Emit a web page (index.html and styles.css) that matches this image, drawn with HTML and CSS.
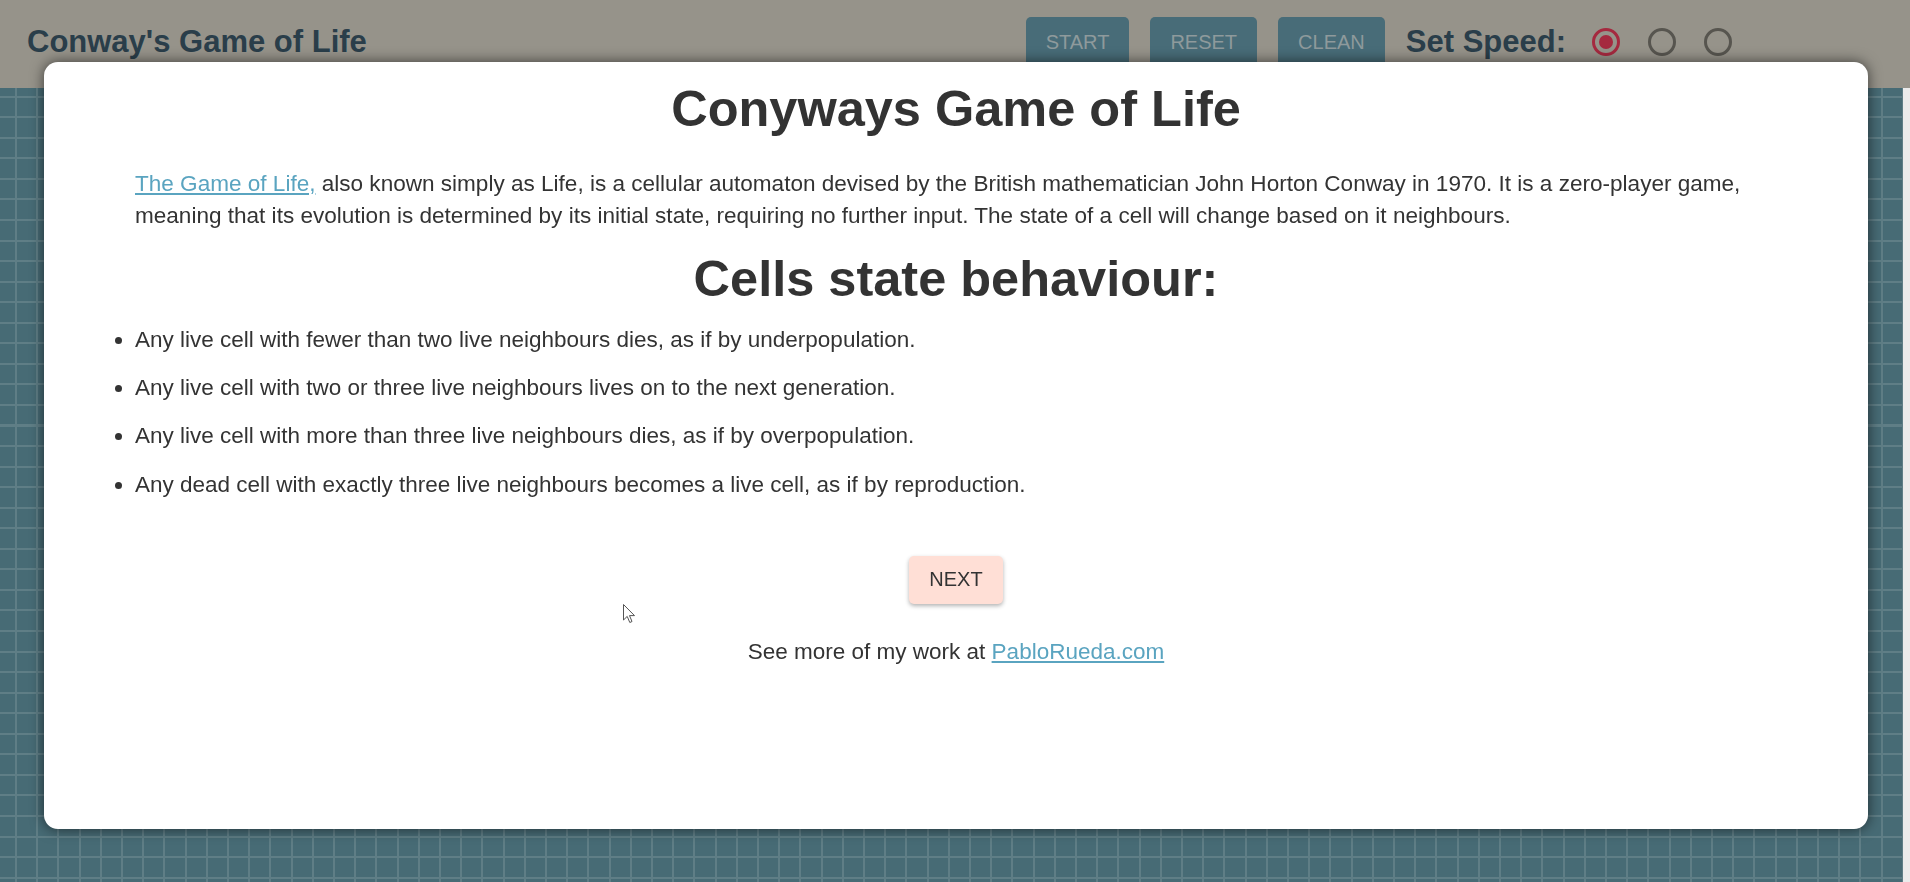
FILE: index.html
```html
<!DOCTYPE html>
<html lang="en">
<head>
<meta charset="utf-8">
<title>Conway's Game of Life</title>
<link rel="stylesheet" href="styles.css">
</head>
<body>
<header class="topbar">
  <h1 class="brand">Conway's Game of Life</h1>
  <div class="controls">
    <button class="ctrl-btn">START</button>
    <button class="ctrl-btn">RESET</button>
    <button class="ctrl-btn">CLEAN</button>
    <span class="speed-label">Set Speed:</span>
    <div class="radios">
      <span class="radio checked"></span>
      <span class="radio"></span>
      <span class="radio"></span>
    </div>
  </div>
</header>
<main class="board"></main>

<div class="modal">
  <h2 class="modal-title">Conyways Game of Life</h2>
  <p class="intro"><a href="#" class="link">The Game of Life,</a> also known simply as Life, is a cellular automaton devised by the British mathematician John Horton Conway in 1970. It is a zero-player game, meaning that its evolution is determined by its initial state, requiring no further input. The state of a cell will change based on it neighbours.</p>
  <h2 class="section-title">Cells state behaviour:</h2>
  <ul class="rules">
    <li>Any live cell with fewer than two live neighbours dies, as if by underpopulation.</li>
    <li>Any live cell with two or three live neighbours lives on to the next generation.</li>
    <li>Any live cell with more than three live neighbours dies, as if by overpopulation.</li>
    <li>Any dead cell with exactly three live neighbours becomes a live cell, as if by reproduction.</li>
  </ul>
  <div class="next-row"><button class="next-btn">NEXT</button></div>
  <p class="credit">See more of my work at <a href="#" class="link">PabloRueda.com</a></p>
</div>

<svg class="cursor" width="13" height="20" viewBox="0 0 13 20" aria-hidden="true">
  <path d="M0.5 0.5 L0.5 16 L4.2 12.4 L6.8 18.5 L9 17.5 L6.5 11.6 L11.5 11.6 Z" fill="#fff" stroke="#555" stroke-width="1" stroke-linejoin="round"/>
</svg>
</body>
</html>
```

FILE: styles.css
```css
html, body {
  margin: 0;
  padding: 0;
  height: 100%;
  overflow: hidden;
}

body {
  font-family: "Liberation Sans", Arial, sans-serif;
  background: #ebebeb;
}

.topbar {
  height: 88px;
  box-sizing: border-box;
  display: flex;
  align-items: flex-start;
  padding: 17px 178px 0 27px;
  background: #96938a;
}

.brand {
  margin: 0;
  font-size: 31px;
  line-height: 50px;
  font-weight: bold;
  color: #2a3e4a;
}

.controls {
  margin-left: auto;
  display: flex;
  align-items: center;
  gap: 21px;
  height: 50px;
}

.ctrl-btn {
  height: 50px;
  padding: 0 20px;
  border: none;
  border-radius: 5px;
  background: #486c78;
  color: #8e9a9c;
  font-family: "Liberation Sans", Arial, sans-serif;
  font-size: 20px;
  line-height: 50px;
}

.speed-label {
  font-size: 31px;
  font-weight: bold;
  line-height: 50px;
  color: #2a3e4a;
}

.radios {
  display: flex;
  gap: 28px;
  margin-left: 5px;
}

.radio {
  width: 28px;
  height: 28px;
  box-sizing: border-box;
  border: 3px solid #57554f;
  border-radius: 50%;
  display: flex;
  align-items: center;
  justify-content: center;
}

.radio.checked {
  border-color: #a5293f;
}

.radio.checked::after {
  content: "";
  width: 14px;
  height: 14px;
  border-radius: 50%;
  background: #a5293f;
}

.board {
  width: 1903px;
  height: 794px;
  background-color: #476b75;
  background-image:
    repeating-linear-gradient(to right, transparent 0, transparent 15px, #5f7e86 15px, #5f7e86 17px, transparent 17px, transparent 21.2px),
    repeating-linear-gradient(to bottom, transparent 0, transparent 7.7px, #5f7e86 7.7px, #5f7e86 9.7px, transparent 9.7px, transparent 20.55px);
}

.modal {
  position: fixed;
  top: 62px;
  left: 44px;
  width: 1824px;
  height: 767px;
  box-sizing: border-box;
  padding: 18px 51px 0;
  background: #fff;
  border-radius: 14px;
  box-shadow: 0 0 14px rgba(0, 0, 0, 0.6);
  color: #333;
}

.modal-title,
.section-title {
  margin: 0;
  font-size: 50.5px;
  line-height: 57.5px;
  font-weight: bold;
  text-align: center;
  color: #333;
}

.section-title {
  margin-top: 18px;
}

.intro {
  margin: 30px 40px 0;
  font-size: 22.55px;
  line-height: 32px;
}

.link {
  color: #5aa4c0;
  text-decoration: underline;
}

.rules {
  margin: 16.5px 0 0;
  padding-left: 40px;
  font-size: 22.5px;
  line-height: 32px;
}

.rules li + li {
  margin-top: 16.4px;
}

.next-row {
  margin-top: 55.3px;
  text-align: center;
}

.next-btn {
  height: 48px;
  padding: 0 20px;
  border: none;
  border-radius: 5px;
  background: #ffdfd6;
  color: #333;
  font-family: "Liberation Sans", Arial, sans-serif;
  font-size: 20px;
  box-shadow: 0 2px 4px rgba(0, 0, 0, 0.3);
}

.credit {
  margin: 32px 0 0;
  font-size: 22.5px;
  line-height: 32px;
  text-align: center;
}

.cursor {
  position: fixed;
  left: 623px;
  top: 604px;
}
```
